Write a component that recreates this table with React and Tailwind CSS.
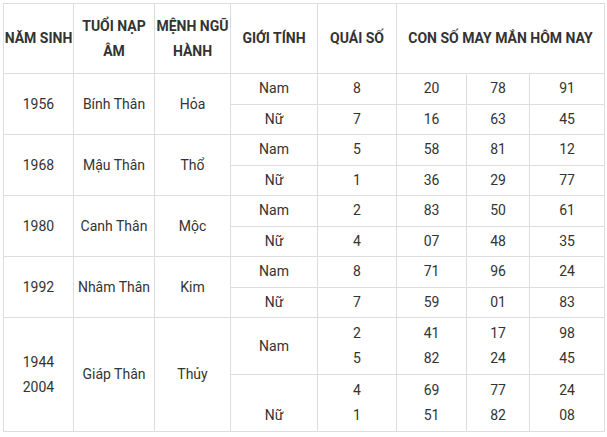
import React from 'react';

const groups = [
  { year: ['1956'], tuoi: 'Bính Thân', menh: 'Hỏa', rows: [
    { g: ['Nam'], q: ['8'], n: [['20', '78', '91']] },
    { g: ['Nữ'], q: ['7'], n: [['16', '63', '45']] },
  ] },
  { year: ['1968'], tuoi: 'Mậu Thân', menh: 'Thổ', rows: [
    { g: ['Nam'], q: ['5'], n: [['58', '81', '12']] },
    { g: ['Nữ'], q: ['1'], n: [['36', '29', '77']] },
  ] },
  { year: ['1980'], tuoi: 'Canh Thân', menh: 'Mộc', rows: [
    { g: ['Nam'], q: ['2'], n: [['83', '50', '61']] },
    { g: ['Nữ'], q: ['4'], n: [['07', '48', '35']] },
  ] },
  { year: ['1992'], tuoi: 'Nhâm Thân', menh: 'Kim', rows: [
    { g: ['Nam'], q: ['8'], n: [['71', '96', '24']] },
    { g: ['Nữ'], q: ['7'], n: [['59', '01', '83']] },
  ] },
  { year: ['1944', '2004'], tuoi: 'Giáp Thân', menh: 'Thủy', rows: [
    { g: ['Nam'], q: ['2', '5'], n: [['41', '17', '98'], ['82', '24', '45']] },
    { g: ['\u00a0', 'Nữ'], q: ['4', '1'], n: [['69', '77', '24'], ['51', '82', '08']] },
  ] },
];

const cell = 'border border-[#dddddd] text-center align-middle p-0 whitespace-nowrap';

const Lines = ({ items }) => (
  <>
    {items.map((t, i) => (
      <div key={i}>{t}</div>
    ))}
  </>
);

export default function App() {
  return (
    <div className="bg-white pl-[3px] pt-[3px] w-[607px] h-[437px] font-['Roboto',sans-serif] text-[14px] text-[#333333]">
      <table className="table-fixed border-collapse w-[601px]">
        <colgroup>
          <col className="w-[70px]" />
          <col className="w-[81px]" />
          <col className="w-[76px]" />
          <col className="w-[87px]" />
          <col className="w-[79px]" />
          <col className="w-[70px]" />
          <col className="w-[63px]" />
          <col className="w-[75px]" />
        </colgroup>
        <thead>
          <tr className="h-[70px] font-bold leading-[25px]">
            <th className={cell}>NĂM SINH</th>
            <th className={cell}>TUỔI NẠP<br />ÂM</th>
            <th className={cell}>MỆNH NGŨ<br />HÀNH</th>
            <th className={cell}>GIỚI TÍNH</th>
            <th className={cell}>QUÁI SỐ</th>
            <th className={cell} colSpan={3}>CON SỐ MAY MẮN HÔM NAY</th>
          </tr>
        </thead>
        <tbody className="leading-[25px]">
          {groups.map((grp, gi) =>
            grp.rows.map((r, ri) => {
              const big = r.q.length > 1;
              return (
                <tr key={gi + '-' + ri} className={big ? 'h-[57px]' : 'h-[30.5px]'}>
                  {ri === 0 && (
                    <>
                      <td className={cell} rowSpan={2}><Lines items={grp.year} /></td>
                      <td className={cell} rowSpan={2}>{grp.tuoi}</td>
                      <td className={cell} rowSpan={2}>{grp.menh}</td>
                    </>
                  )}
                  <td className={cell}><Lines items={r.g} /></td>
                  <td className={cell}><Lines items={r.q} /></td>
                  {[0, 1, 2].map((c) => (
                    <td key={c} className={cell}>
                      <Lines items={r.n.map((line) => line[c])} />
                    </td>
                  ))}
                </tr>
              );
            })
          )}
        </tbody>
      </table>
    </div>
  );
}
